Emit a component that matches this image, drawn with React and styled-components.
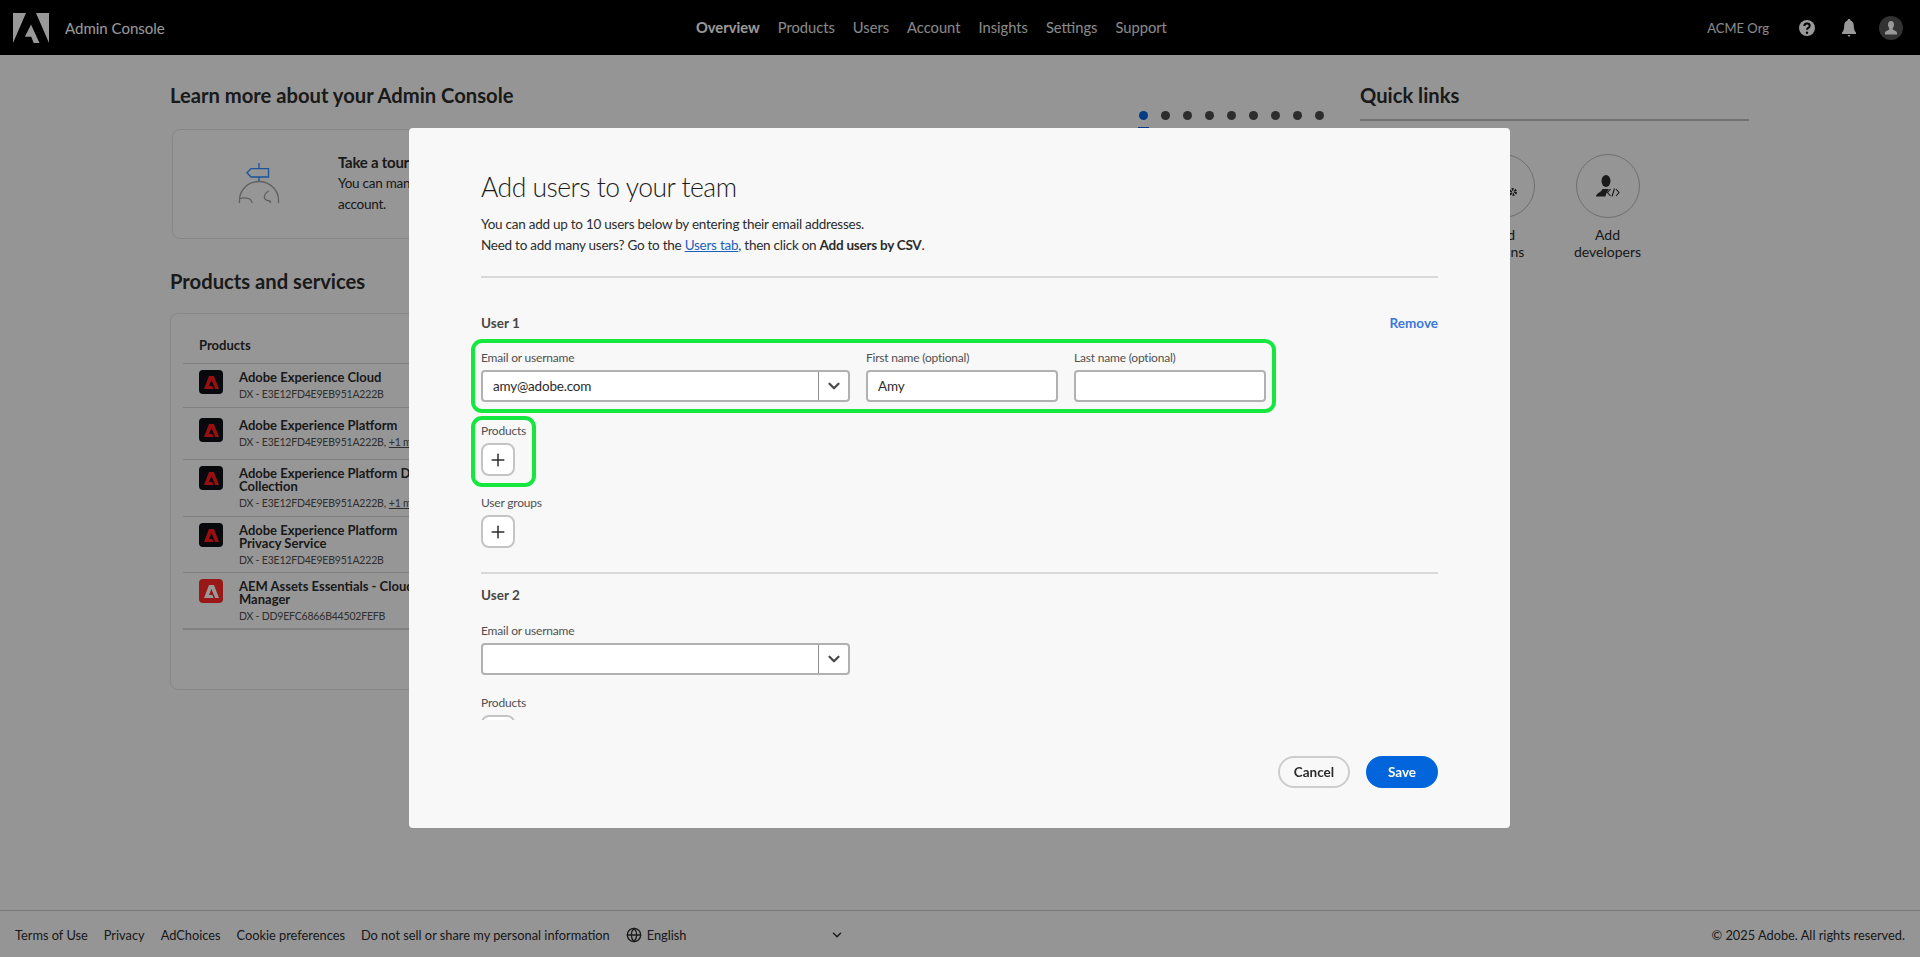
import React from 'react'
import styled, { createGlobalStyle } from 'styled-components'
import { ChevronDown, Globe, Plus } from 'lucide-react'

const GlobalStyle = createGlobalStyle`
  html, body {
    margin: 0;
    padding: 0;
    background: #f8f8f8;
    font-family: Lato, "Noto Sans", sans-serif;
    color: #2c2c2c;
  }
  * { box-sizing: border-box; }
`

const Page = styled.div`
  height: 957px;
  display: flex;
  flex-direction: column;
  overflow: hidden;
`

const Header = styled.header`
  height: 55px;
  flex: none;
  background: #000;
  display: flex;
  align-items: center;
  padding: 0 17px 0 13px;
  color: #fff;
`
const Brand = styled.div`
  width: 683px;
  display: flex;
  align-items: center;
  gap: 16px;
  font-size: 15px;
`
const Nav = styled.nav`
  display: flex;
  gap: 18px;
  padding-bottom: 2px;
`
const NavLink = styled.a`
  font-size: 14.7px;
  color: ${p => (p.$active ? '#fff' : '#e4e4e4')};
  font-weight: ${p => (p.$active ? 700 : 400)};
`
const HeaderRight = styled.div`
  margin-left: auto;
  display: flex;
  align-items: center;
`
const OrgName = styled.span`
  font-size: 13px;
  margin-right: 29px;
  color: #e4e4e4;
`
const HeaderIcon = styled.svg`
  width: ${p => p.$w || 18}px;
  height: 18px;
  margin-right: ${p => p.$mr || 0}px;
  display: block;
`
const Avatar = styled.div`
  width: 24px;
  height: 24px;
  border-radius: 50%;
  background: #555;
  display: flex;
  align-items: center;
  justify-content: center;
`

const Content = styled.main`
  flex: 1;
  width: 1580px;
  margin: 0 auto;
  padding-top: 26px;
  display: grid;
  grid-template-columns: 1155px 389px;
  column-gap: 35px;
  align-content: start;
`
const HeadRow = styled.div`
  display: flex;
  justify-content: space-between;
  align-items: flex-start;
  height: 28px;
`
const SectionTitle = styled.h2`
  margin: 0;
  font-size: 20.2px;
  line-height: 28px;
  font-weight: 700;
`
const Pager = styled.div`
  display: flex;
  gap: 13px;
  padding-top: 30px;
  height: 47px;
  margin-right: 1px;
`
const Dot = styled.span`
  position: relative;
  width: 9px;
  height: 9px;
  border-radius: 50%;
  background: ${p => (p.$active ? '#0265dc' : '#4b4b4b')};
  &::after {
    content: ${p => (p.$active ? '""' : 'none')};
    position: absolute;
    left: -1px;
    top: 16px;
    width: 11px;
    height: 3px;
    background: #0265dc;
  }
`
const Card = styled.section`
  border: 1px solid #e1e1e1;
  border-radius: 8px;
  background: #fafafa;
`
const TourCard = styled(Card)`
  margin: 20px 0 0 2px;
  height: 110px;
  display: flex;
  padding: 22px 0 0 65px;
`
const TourText = styled.div`
  margin-left: 58px;
  font-size: 13.5px;
  letter-spacing: -0.25px;
  line-height: 21px;
  b {
    display: block;
    font-size: 15px;
    line-height: 20px;
    margin-bottom: 1px;
  }
`
const ProductsTitle = styled(SectionTitle)`
  margin-top: 28px;
`
const ProductsCard = styled(Card)`
  margin-top: 18px;
  height: 377px;
  padding: 23px 12px 0;
`
const ProductsHead = styled.div`
  font-size: 13px;
  font-weight: 700;
  padding-left: 16px;
  height: 27px;
  border-bottom: 1px solid #d5d5d5;
`
const ProductRow = styled.div`
  display: flex;
  padding: ${p => p.$pt || 6}px 0 0 16px;
  height: ${p => p.$h}px;
  border-bottom: ${p => (p.$last ? 2 : 1)}px solid #d5d5d5;
`
const ProductIcon = styled.div`
  width: 24px;
  height: 24px;
  flex: none;
  border-radius: 4px;
  background: ${p => (p.$red ? '#ff2a2a' : '#0c0f16')};
  display: flex;
  align-items: center;
  justify-content: center;
`
const ProductInfo = styled.div`
  margin-left: 16px;
  width: 197px;
`
const ProductName = styled.div`
  font-size: 13px;
  line-height: 13px;
  font-weight: 700;
  padding-top: 1px;
`
const ProductSub = styled.div`
  font-size: 10.5px;
  letter-spacing: -0.2px;
  line-height: 16px;
  color: #505050;
  white-space: nowrap;
  margin-top: 2px;
  u { margin-left: 3px; }
`

const QuickLinks = styled.div`
  grid-column: 2;
  grid-row: 1 / span 4;
`
const QuickRule = styled.div`
  height: 2px;
  background: #bcbcbc;
  margin-top: 10px;
`
const QuickGrid = styled.div`
  display: flex;
  gap: 30px;
  margin-top: 33px;
`
const QuickItem = styled.div`
  width: 75px;
  display: flex;
  flex-direction: column;
  align-items: center;
  text-align: center;
  font-size: 14px;
  line-height: 17px;
`
const QuickCircle = styled.div`
  width: 64px;
  height: 64px;
  border: 1.5px solid #b8b8b8;
  border-radius: 50%;
  margin-bottom: 8px;
  display: flex;
  align-items: center;
  justify-content: center;
`

const Footer = styled.footer`
  height: 47px;
  flex: none;
  border-top: 1px solid #c8c8c8;
  display: flex;
  align-items: center;
  padding: 1px 15px 0;
  font-size: 12.8px;
  color: #2c2c2c;
`
const FooterLinks = styled.div`
  display: flex;
  gap: 16px;
`
const LangPicker = styled.div`
  display: flex;
  align-items: center;
  width: 218px;
  margin-left: 16px;
  gap: 5px;
  svg:last-child { margin-left: auto; }
`
const Copyright = styled.span`
  margin-left: auto;
`

const Overlay = styled.div`
  position: fixed;
  inset: 0;
  background: rgba(0, 0, 0, 0.4);
  display: flex;
  align-items: center;
  justify-content: center;
  padding: 0 1px 1px 0;
  z-index: 10;
`
const Dialog = styled.div`
  width: 1101px;
  height: 700px;
  background: #f8f8f8;
  border-radius: 4px;
  display: flex;
  flex-direction: column;
`
const DialogBody = styled.div`
  flex: 1;
  min-height: 0;
  overflow: hidden;
  padding: 41px 72px 0;
`
const DialogTitle = styled.h1`
  margin: 0 0 9px;
  font-size: 26.5px;
  letter-spacing: -0.5px;
  line-height: 36px;
  font-weight: 300;
  color: #1d1d1d;
`
const Intro = styled.p`
  margin: 0 0 20px;
  font-size: 13.5px;
  letter-spacing: -0.25px;
  line-height: 21px;
  a { color: #1c5fb8; text-decoration: underline; }
`
const Rule = styled.div`
  height: 2px;
  background: #d9d9d9;
  margin-top: ${p => p.$mt || 0}px;
`
const UserHead = styled.div`
  display: flex;
  justify-content: space-between;
  font-size: 13.5px;
  line-height: 18px;
  font-weight: 700;
  color: #464646;
  margin-top: ${p => p.$mt}px;
`
const RemoveLink = styled.a`
  color: #3a78d8;
`
const FieldsRow = styled.div`
  position: relative;
  display: flex;
  width: fit-content;
  gap: 16px;
  margin-top: ${p => p.$mt}px;
  ${p => p.$marked && `
    &::after {
      content: "";
      position: absolute;
      inset: -11px -10px -11px -10px;
      border: 4px solid #14e83f;
      border-radius: 11px;
    }
  `}
`
const Field = styled.div`
  width: ${p => p.$w}px;
`
const Label = styled.div`
  font-size: 12px;
  letter-spacing: -0.2px;
  line-height: 15px;
  color: #505050;
  margin-bottom: 5px;
`
const InputBox = styled.div`
  height: 32px;
  background: #fff;
  border: 2px solid #b1b1b1;
  border-radius: 4px;
  display: flex;
  align-items: center;
  font-size: 13.5px;
  letter-spacing: -0.2px;
  padding-left: 10px;
  color: #2c2c2c;
`
const InputText = styled.span`
  flex: 1;
`
const ComboButton = styled.div`
  width: 30px;
  height: 100%;
  border-left: 1px solid #8e8e8e;
  display: flex;
  align-items: center;
  justify-content: center;
  color: #4b4b4b;
`
const AddGroup = styled.div`
  position: relative;
  width: 34px;
  margin-top: ${p => p.$mt}px;
  white-space: nowrap;
  ${p => p.$marked && `
    &::after {
      content: "";
      position: absolute;
      inset: -7px -21px -11px -10px;
      border: 4px solid #14e83f;
      border-radius: 11px;
    }
  `}
`
const AddButton = styled.button`
  width: 34px;
  height: 33px;
  padding: 0;
  border: 2px solid #c4c4c4;
  border-radius: 8px;
  background: #fff;
  color: #2c2c2c;
  display: flex;
  align-items: center;
  justify-content: center;
`
const DialogFooter = styled.div`
  flex: none;
  height: 108px;
  padding: 36px 72px 0;
  display: flex;
  justify-content: flex-end;
  gap: 16px;
`
const PillButton = styled.button`
  width: 72px;
  height: 32px;
  border-radius: 16px;
  font-family: inherit;
  font-size: 13.5px;
  font-weight: 700;
  padding: 0;
  border: 2px solid ${p => (p.$primary ? '#0265dc' : '#cdcdcd')};
  background: ${p => (p.$primary ? '#0265dc' : 'transparent')};
  color: ${p => (p.$primary ? '#fff' : '#2c2c2c')};
`

const AdobeLogo = () => (
  <svg width="36" height="30" viewBox="0 0 36 30" fill="#fff" style={{ display: 'block' }}>
    <path d="M0 0h13L0 30zM23 0h13v30zM18 11.500L26.500 30h-5.800l-2.500-6.200h-6.300z" />
  </svg>
)

const ProductGlyph = ({ color }) => (
  <svg width="15" height="13" viewBox="0 0 15 13" fill={color} style={{ display: 'block' }}>
    <path d="M5 0h5l5 13h-3.800L7.400 4 5 10h3.300l1.200 3H0z" />
  </svg>
)

const SignpostIcon = () => (
  <svg width="42" height="41" viewBox="0 0 42 41" fill="none" strokeWidth="1.3" style={{ flex: 'none', marginTop: 11 }}>
    <path d="M21 0v5.600M21 14v5" stroke="#2d8cff" />
    <path d="M9 9.800l4-4.200h17.500V14H13z" stroke="#2d8cff" />
    <path d="M1.500 40v-3a19.500 18.500 0 0 1 39 0v3M1.500 35.500c5-1 12.500-1 12.500 4.500M31 28c-6 3-6 9-1 9.500 2 0 2.500 1 2.500 2.500" stroke="#a0a0a0" />
  </svg>
)

const DevIcon = () => (
  <svg width="24" height="22" viewBox="0 0 24 22" fill="none">
    <ellipse cx="10" cy="6" rx="4.500" ry="6" fill="#2c2c2c" />
    <path d="M0 21.500C.5 18 5 17.500 6.500 14h6.500c-1 1.500-3 4-3.500 7.500z" fill="#2c2c2c" />
    <path d="M14.500 14l-3 3.500 3 3.500M16 21.500l2.500-8M20 14l3 3.500-3 3.500" stroke="#2c2c2c" strokeWidth="1.100" />
  </svg>
)

const AdminIcon = () => (
  <svg width="28" height="28" viewBox="0 0 28 28" fill="none" style={{ marginLeft: 4 }}>
    <path d="M10 3c3 0 5 3 5 6.500 0 3-1 5-2.500 6.500v2L8 26H1v-3.500c0-3 5-4 6-5V16C6 14.500 5 12.500 5 9.500 5 6 7 3 10 3z" fill="#2c2c2c" />
    <circle cx="22" cy="20" r="2.500" stroke="#2c2c2c" strokeWidth="3" strokeDasharray="1.600 1" />
  </svg>
)

const products = [
  { name: 'Adobe Experience Cloud', sub: 'DX - E3E12FD4E9EB951A222B', h: 44 },
  { name: 'Adobe Experience Platform', sub: 'DX - E3E12FD4E9EB951A222B,', more: true, h: 52, pt: 10 },
  { name: 'Adobe Experience Platform Data Collection', sub: 'DX - E3E12FD4E9EB951A222B,', more: true, h: 57 },
  { name: 'Adobe Experience Platform Privacy Service', sub: 'DX - E3E12FD4E9EB951A222B', h: 56 },
  { name: 'AEM Assets Essentials - Cloud Manager', sub: 'DX - DD9EFC6866B44502FEFB', red: true, h: 57, last: true },
]

const navItems = ['Products', 'Users', 'Account', 'Insights', 'Settings', 'Support']
const footerLinks = ['Terms of Use', 'Privacy', 'AdChoices', 'Cookie preferences', 'Do not sell or share my personal information']

const EmailField = ({ value }) => (
  <Field $w={369}>
    <Label>Email or username</Label>
    <InputBox>
      <InputText>{value}</InputText>
      <ComboButton><ChevronDown size={18} strokeWidth={3} /></ComboButton>
    </InputBox>
  </Field>
)

const App = () => {
  return (
    <Page>
      <GlobalStyle />
      <Header>
        <Brand>
          <AdobeLogo />
          Admin Console
        </Brand>
        <Nav>
          <NavLink $active>Overview</NavLink>
          {navItems.map(item => <NavLink key={item}>{item}</NavLink>)}
        </Nav>
        <HeaderRight>
          <OrgName>ACME Org</OrgName>
          <HeaderIcon viewBox="0 0 18 18" $mr={24}>
            <circle cx="9" cy="9" r="8" fill="#fff" />
            <path d="M6.300 7c0-1.700 1.200-2.500 2.700-2.500s2.700.9 2.700 2.300c0 2.200-2.700 2-2.700 4" fill="none" stroke="#000" strokeWidth="2" />
            <circle cx="9" cy="13.700" r="1.200" fill="#000" />
          </HeaderIcon>
          <HeaderIcon viewBox="0 0 18 18" $mr={21}>
            <path d="M9 0c1 0 1.500.7 1.500 1.500 2.300.7 3.300 2.700 3.300 5.500 0 3 .7 5 2.200 6.500V15H2v-1.500C3.500 12 4.200 10 4.200 7c0-2.800 1-4.800 3.300-5.500C7.500.7 8 0 9 0zM7.500 16h3L9 18z" fill="#fff" />
          </HeaderIcon>
          <Avatar>
            <svg width="14" height="14" viewBox="0 0 14 14" fill="#fff">
              <path d="M7 0c2 0 3 1.700 3 3.700 0 1.500-.6 2.700-1.300 3.500v1.300C10 9.500 13 10 13 12v1.500H1V12c0-2 3-2.500 4.300-3.500V7.200C4.600 6.400 4 5.200 4 3.700 4 1.700 5 0 7 0z" />
            </svg>
          </Avatar>
        </HeaderRight>
      </Header>

      <Content>
        <div>
          <HeadRow>
            <SectionTitle>Learn more about your Admin Console</SectionTitle>
            <Pager>
              {Array.from({ length: 9 }).map((_, i) => <Dot key={i} $active={i === 0} />)}
            </Pager>
          </HeadRow>
          <TourCard>
            <SignpostIcon />
            <TourText>
              <b>Take a tour</b>
              You can manage your products, users and settings from your<br />
              account.
            </TourText>
          </TourCard>
          <ProductsTitle>Products and services</ProductsTitle>
          <ProductsCard>
            <ProductsHead>Products</ProductsHead>
            {products.map(product => (
              <ProductRow key={product.name} $h={product.h} $pt={product.pt} $last={product.last}>
                <ProductIcon $red={product.red}>
                  <ProductGlyph color={product.red ? '#fff' : '#ff1a1a'} />
                </ProductIcon>
                <ProductInfo>
                  <ProductName>{product.name}</ProductName>
                  <ProductSub>{product.sub}{product.more && <u>+1 more</u>}</ProductSub>
                </ProductInfo>
              </ProductRow>
            ))}
          </ProductsCard>
        </div>
        <QuickLinks>
          <SectionTitle>Quick links</SectionTitle>
          <QuickRule />
          <QuickGrid>
            <QuickItem><QuickCircle />Add<br />users</QuickItem>
            <QuickItem><QuickCircle><AdminIcon /></QuickCircle>Add<br />admins</QuickItem>
            <QuickItem><QuickCircle><DevIcon /></QuickCircle>Add<br />developers</QuickItem>
          </QuickGrid>
        </QuickLinks>
      </Content>

      <Footer>
        <FooterLinks>
          {footerLinks.map(link => <span key={link}>{link}</span>)}
        </FooterLinks>
        <LangPicker>
          <Globe size={16} />
          English
          <ChevronDown size={14} strokeWidth={2.5} />
        </LangPicker>
        <Copyright>© 2025 Adobe. All rights reserved.</Copyright>
      </Footer>

      <Overlay>
        <Dialog>
          <DialogBody>
            <DialogTitle>Add users to your team</DialogTitle>
            <Intro>
              You can add up to 10 users below by entering their email addresses.<br />
              Need to add many users? Go to the <a>Users tab</a>, then click on <b>Add users by CSV</b>.
            </Intro>
            <Rule />

            <UserHead $mt={36}>User 1<RemoveLink>Remove</RemoveLink></UserHead>
            <FieldsRow $mt={18} $marked>
              <EmailField value="amy@adobe.com" />
              <Field $w={192}>
                <Label>First name (optional)</Label>
                <InputBox>Amy</InputBox>
              </Field>
              <Field $w={192}>
                <Label>Last name (optional)</Label>
                <InputBox />
              </Field>
            </FieldsRow>
            <AddGroup $mt={21} $marked>
              <Label>Products</Label>
              <AddButton><Plus size={20} strokeWidth={1.8} /></AddButton>
            </AddGroup>
            <AddGroup $mt={19}>
              <Label>User groups</Label>
              <AddButton><Plus size={20} strokeWidth={1.8} /></AddButton>
            </AddGroup>
            <Rule $mt={24} />

            <UserHead $mt={12}>User 2</UserHead>
            <FieldsRow $mt={19}>
              <EmailField />
            </FieldsRow>
            <AddGroup $mt={20}>
              <Label>Products</Label>
              <AddButton><Plus size={20} strokeWidth={1.8} /></AddButton>
            </AddGroup>
          </DialogBody>
          <DialogFooter>
            <PillButton>Cancel</PillButton>
            <PillButton $primary>Save</PillButton>
          </DialogFooter>
        </Dialog>
      </Overlay>
    </Page>
  )
}

export default App
